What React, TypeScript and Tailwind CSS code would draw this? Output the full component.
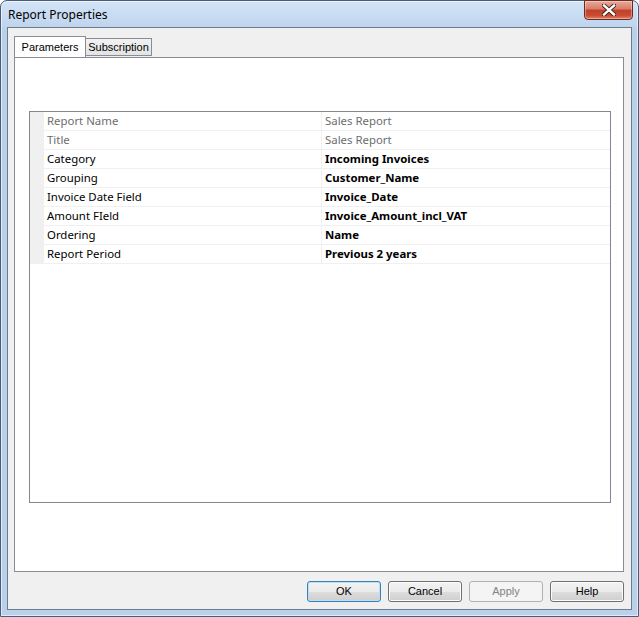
import React from 'react';

const rows = [
  { label: 'Report Name', value: 'Sales Report', disabled: true },
  { label: 'Title', value: 'Sales Report', disabled: true },
  { label: 'Category', value: 'Incoming Invoices' },
  { label: 'Grouping', value: 'Customer_Name' },
  { label: 'Invoice Date Field', value: 'Invoice_Date' },
  { label: 'Amount FIeld', value: 'Invoice_Amount_incl_VAT' },
  { label: 'Ordering', value: 'Name' },
  { label: 'Report Period', value: 'Previous 2 years' },
];

function CloseButton() {
  return (
    <div className="absolute right-[5px] top-[-1px] flex h-[20px] w-[49px] items-center justify-center rounded-b-[4px] border border-[#6b2a20] bg-[linear-gradient(#e9a99a_0%,#d77b68_45%,#c0402a_50%,#c94a31_80%,#e0856b_100%)] shadow-[inset_0_0_0_1px_rgba(255,255,255,0.35)]">
      <svg width="14" height="12" viewBox="0 0 14 12">
        <path d="M2 1.5 L12 10.5 M12 1.5 L2 10.5" stroke="#3a1a14" strokeWidth="4.2" strokeLinecap="square" />
        <path d="M2 1.5 L12 10.5 M12 1.5 L2 10.5" stroke="#ffffff" strokeWidth="2.4" strokeLinecap="square" />
      </svg>
    </div>
  );
}

function WinButton({ label, kind }: { label: string; kind?: 'default' | 'disabled' }) {
  const base =
    'flex h-[21px] w-[74px] items-center justify-center rounded-[3px] border text-[11px] font-["Liberation_Sans",sans-serif]';
  if (kind === 'disabled') {
    return <div className={`${base} border-[#adb2b5] bg-[#f4f4f4] text-[#838383]`}>{label}</div>;
  }
  if (kind === 'default') {
    return (
      <div
        className={`${base} border-[#3c7fb1] bg-[linear-gradient(#f2f2f2_0%,#ebebeb_50%,#dddddd_51%,#cfcfcf_100%)] text-black shadow-[inset_0_0_0_1px_#b7e2f9]`}
      >
        {label}
      </div>
    );
  }
  return (
    <div
      className={`${base} border-[#707070] bg-[linear-gradient(#f2f2f2_0%,#ebebeb_50%,#dddddd_51%,#cfcfcf_100%)] text-black shadow-[inset_0_0_0_1px_#fcfcfc]`}
    >
      {label}
    </div>
  );
}

export default function App() {
  return (
    <div className="h-[617px] w-[639px] bg-white">
      <div className="relative flex h-[617px] w-[639px] flex-col rounded-t-[7px] border border-[#4a5d78] bg-[linear-gradient(#d4e4f6_0px,#bfd5ee_26px,#b9d1ea_27px,#b9d1ea_100%)] px-[6px] pb-[6px] shadow-[inset_0_0_0_1px_rgba(255,255,255,0.55)]">
        {/* title bar */}
        <div className="flex h-[26px] shrink-0 items-center pl-[1px] pt-[2px] text-[12px] text-black font-['Noto_Sans',sans-serif]">
          Report Properties
        </div>
        <CloseButton />

        {/* client area */}
        <div className="flex flex-1 flex-col border border-[#6f7b8b] bg-[#f0f0f0] pl-[6px] pr-[7px] pt-[9px] font-['Liberation_Sans',sans-serif]">
          {/* tabs */}
          <div className="relative z-10 flex h-[20px] items-end">
            <div className="flex h-[21px] w-[72px] items-start justify-center border border-b-0 border-[#898c95] bg-white pt-[2px] text-[11px] text-black">
              Parameters
            </div>
            <div className="mb-[1px] flex h-[18px] w-[66px] items-center justify-center border border-l-0 border-[#898c95] bg-[linear-gradient(#f2f2f2,#e3e3e3)] text-[11px] text-black">
              Subscription
            </div>
          </div>

          {/* tab panel */}
          <div className="h-[515px] border border-[#898c95] bg-white pl-[14px] pr-[12px] pt-[53px]">
            <div className="flex h-[392px] flex-col border border-[#828790] bg-white font-['Noto_Sans',sans-serif] text-[11.4px]">
              {rows.map((r) => (
                <div key={r.label} className="flex h-[19px] shrink-0">
                  <div className="w-[14px] shrink-0 bg-[#f0f0f0]" />
                  <div className="flex flex-1 border-b border-[#f0f0f0]">
                    <div
                      className={`flex w-[278px] items-center border-r border-[#f0f0f0] pl-[3px] ${
                        r.disabled ? 'text-[#6d6d6d]' : 'text-black'
                      }`}
                    >
                      {r.label}
                    </div>
                    <div
                      className={`flex flex-1 items-center pl-[3px] ${
                        r.disabled ? 'text-[#6d6d6d]' : 'font-bold text-black'
                      }`}
                    >
                      {r.value}
                    </div>
                  </div>
                </div>
              ))}
            </div>
          </div>

          {/* buttons */}
          <div className="mt-[9px] flex justify-end gap-[7px]">
            <WinButton label="OK" kind="default" />
            <WinButton label="Cancel" />
            <WinButton label="Apply" kind="disabled" />
            <WinButton label="Help" />
          </div>
        </div>
      </div>
    </div>
  );
}
